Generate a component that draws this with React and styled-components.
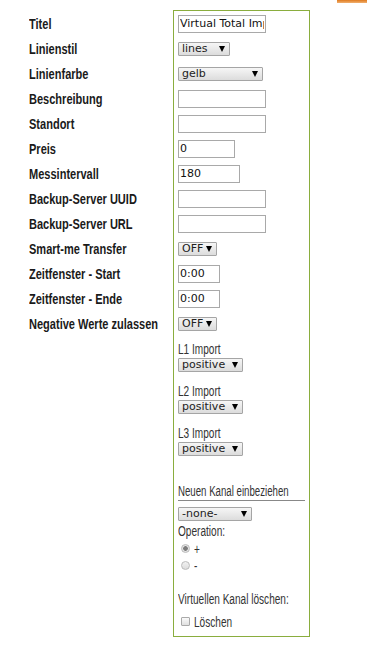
import React from "react";
import styled, { createGlobalStyle } from "styled-components";

const Global = createGlobalStyle`
  body {
    margin: 0;
    background: #ffffff;
    font-family: "Liberation Sans", sans-serif;
  }
`;

const TopStrip = styled.div`
  display: flex;
  justify-content: flex-end;
  height: 10px;
`;

const OrangeEdge = styled.div`
  width: 30px;
  height: 3px;
  margin-right: 2px;
  background: linear-gradient(#e07a1e, #f0b070);
`;

const Page = styled.div`
  display: flex;
  padding-left: 29px;
`;

const LabelColumn = styled.div`
  width: 144px;
  padding-top: 1px;
  display: flex;
  flex-direction: column;
`;

const Label = styled.div`
  height: 25px;
  display: flex;
  align-items: center;
  white-space: nowrap;
`;

/* narrow face is not installed: squeeze a regular one */
const Narrow = styled.span`
  display: inline-block;
  white-space: nowrap;
  transform-origin: left center;
  transform: scaleX(${(p) => p.$k});
  font-size: ${(p) => p.$size}px;
  font-weight: ${(p) => (p.$bold ? "bold" : "normal")};
  color: ${(p) => (p.$bold ? "#1a1a1a" : "#333")};
`;

const Box = styled.div`
  width: 131px;
  height: 625px;
  border: 1px solid #8aad3e;
  padding-left: 4px;
  display: flex;
  flex-direction: column;
  & > * {
    flex-shrink: 0;
  }
`;

const Row = styled.div`
  height: 25px;
  display: flex;
  align-items: center;
`;

const TextInput = styled.input`
  box-sizing: border-box;
  width: ${(p) => p.$w}px;
  height: 18px;
  border: 1px solid #a9a9a9;
  padding: 0 1px;
  font-family: "DejaVu Sans", sans-serif;
  font-size: 11px;
  color: #111;
  background: #fff;
  outline: none;
`;

const SelectWrap = styled.span`
  position: relative;
  display: inline-block;
  height: 14px;
`;

const Select = styled.select`
  appearance: none;
  box-sizing: border-box;
  display: block;
  width: ${(p) => p.$w}px;
  height: 14px;
  border: 1px solid #a5a5a5;
  border-radius: 1px;
  padding: 0 0 0 3px;
  font-family: "DejaVu Sans", sans-serif;
  font-size: 11px;
  line-height: 12px;
  color: #222;
  background: linear-gradient(#f6f6f6, #dcdcdc);
  outline: none;
`;

const Arrow = styled.span`
  position: absolute;
  right: 5px;
  top: 4px;
  width: 0;
  height: 0;
  border-left: 3px solid transparent;
  border-right: 3px solid transparent;
  border-top: 6px solid #000;
  pointer-events: none;
`;

const Text = styled.div`
  line-height: 15px;
  height: 15px;
`;

const Group = styled.div`
  margin-top: ${(p) => p.$top}px;
  display: flex;
  flex-direction: column;
  align-items: flex-start;
  gap: ${(p) => p.$gap || 0}px;
`;

const Heading = styled.div`
  margin-top: 27px;
  width: 127px;
  height: 15px;
  line-height: 15px;
  padding-bottom: 2px;
  border-bottom: 1px solid #888;
`;

const Option = styled.div`
  display: flex;
  align-items: center;
  gap: 4px;
  height: 17px;
  padding-left: 3px;
  margin-top: ${(p) => p.$top || 0}px;
`;

const Radio = styled.span`
  box-sizing: border-box;
  width: 9px;
  height: 9px;
  border-radius: 50%;
  border: 1px solid #bbb;
  background: ${(p) =>
    p.$on
      ? "radial-gradient(circle, #7d7d7d 0 2px, #e4e4e4 2.6px)"
      : "linear-gradient(#f2f2f2, #dcdcdc)"};
`;

const Check = styled.span`
  box-sizing: border-box;
  width: 9px;
  height: 9px;
  border: 1px solid #aaa;
  border-radius: 1px;
  background: linear-gradient(#fafafa, #e0e0e0);
`;

function Dropdown({ w, value }) {
  return (
    <SelectWrap>
      <Select $w={w} defaultValue={value}>
        <option>{value}</option>
      </Select>
      <Arrow />
    </SelectWrap>
  );
}

function Small({ children, k = 0.72 }) {
  return (
    <Narrow $k={k} $size={14}>
      {children}
    </Narrow>
  );
}

const labels = [
  "Titel",
  "Linienstil",
  "Linienfarbe",
  "Beschreibung",
  "Standort",
  "Preis",
  "Messintervall",
  "Backup-Server UUID",
  "Backup-Server URL",
  "Smart-me Transfer",
  "Zeitfenster - Start",
  "Zeitfenster - Ende",
  "Negative Werte zulassen",
];

export default function App() {
  return (
    <>
      <Global />
      <TopStrip>
        <OrangeEdge />
      </TopStrip>
      <Page>
        <LabelColumn>
          {labels.map((l) => (
            <Label key={l}>
              <Narrow $bold $k={0.735} $size={15}>{l}</Narrow>
            </Label>
          ))}
        </LabelColumn>
        <Box>
          <Row><TextInput $w={88} defaultValue="Virtual Total Import" /></Row>
          <Row><Dropdown w={52} value="lines" /></Row>
          <Row><Dropdown w={85} value="gelb" /></Row>
          <Row><TextInput $w={88} /></Row>
          <Row><TextInput $w={88} /></Row>
          <Row><TextInput $w={57} defaultValue="0" /></Row>
          <Row><TextInput $w={62} defaultValue="180" /></Row>
          <Row><TextInput $w={88} /></Row>
          <Row><TextInput $w={88} /></Row>
          <Row><Dropdown w={39} value="OFF" /></Row>
          <Row><TextInput $w={42} defaultValue="0:00" /></Row>
          <Row><TextInput $w={42} defaultValue="0:00" /></Row>
          <Row><Dropdown w={39} value="OFF" /></Row>
          <Group $top={5} $gap={2}>
            <Text><Small>L1 Import</Small></Text>
            <Dropdown w={65} value="positive" />
          </Group>
          <Group $top={11} $gap={2}>
            <Text><Small>L2 Import</Small></Text>
            <Dropdown w={65} value="positive" />
          </Group>
          <Group $top={11} $gap={2}>
            <Text><Small>L3 Import</Small></Text>
            <Dropdown w={65} value="positive" />
          </Group>
          <Heading><Small k={0.69}>Neuen Kanal einbeziehen</Small></Heading>
          <Group $top={6}>
            <Dropdown w={74} value="-none-" />
            <Text style={{ marginTop: 2 }}><Small>Operation:</Small></Text>
            <Option $top={2}><Radio $on /><Small>+</Small></Option>
            <Option><Radio /><Small>-</Small></Option>
          </Group>
          <Group $top={17}>
            <Text><Small>Virtuellen Kanal löschen:</Small></Text>
            <Option $top={7}><Check /><Small>Löschen</Small></Option>
          </Group>
        </Box>
      </Page>
    </>
  );
}
